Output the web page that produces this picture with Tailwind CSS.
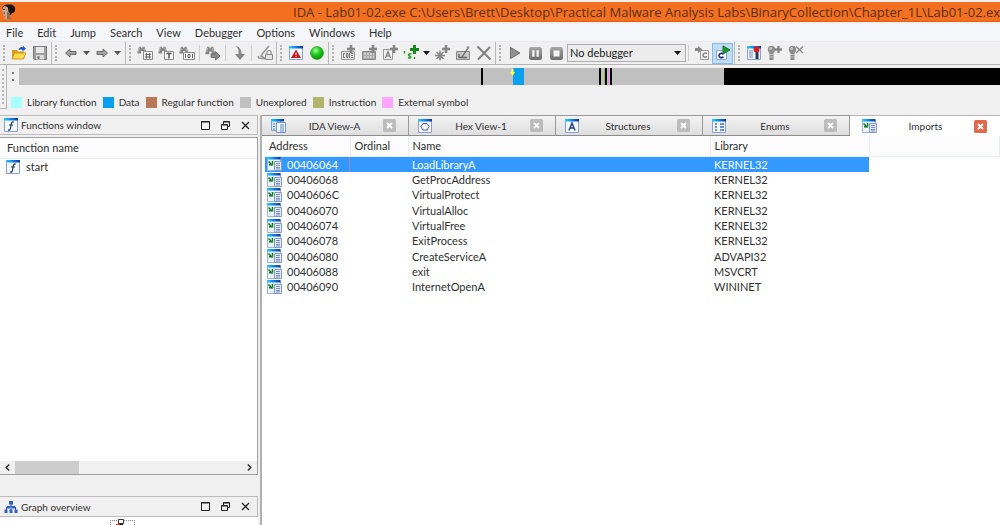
<!DOCTYPE html>
<html lang="en">
<head>
<meta charset="utf-8">
<title>IDA - Lab01-02.exe</title>
<script src="https://cdn.jsdelivr.net/npm/@tailwindcss/browser@4"></script>
</head>
<body class="h-screen flex flex-col overflow-hidden bg-[#f0f0f0] font-['Lato','Open_Sans',sans-serif] text-[11px] leading-4 text-[#303030]">
<svg class="absolute size-0" aria-hidden="true">
  <defs>
    <linearGradient id="bar"><stop offset="0" stop-color="#1fd0ff"/><stop offset=".5" stop-color="#1080e8"/><stop offset="1" stop-color="#0838a0"/></linearGradient>
    <radialGradient id="ball" cx=".4" cy=".3" r=".8"><stop offset="0" stop-color="#a8ff98"/><stop offset=".4" stop-color="#1fd01f"/><stop offset="1" stop-color="#067a06"/></radialGradient>
    <linearGradient id="btn" x2="0" y2="1"><stop offset="0" stop-color="#a8a8a8"/><stop offset="1" stop-color="#6c6c6c"/></linearGradient>
    <symbol id="win" viewBox="0 0 14 14"><path d="M.5.5h13v13H.5z" fill="#f4f8ff" stroke="#8c9fd8"/><path d="M0 0h14v2.5H0z" fill="url(#bar)"/></symbol>
    <symbol id="fn" viewBox="0 0 14 14"><use href="#win"/><path d="M9.800 4.200c-1.800-.8-2.300.6-2.600 2.200l-.8 4c-.3 1.500-1 2-2.400 1.500M5 7h4" fill="none" stroke="#23395e" stroke-width="1.200"/></symbol>
    <symbol id="imp" viewBox="0 0 15 14"><path d="M.5 1.500h13v12H.5z" fill="#edf4ff" stroke="#9fb2dc"/><path d="M0 0h13.500v2.500H0z" fill="url(#bar)"/><path d="M7.500 4.500h7v9h-7z" fill="#e4ecfc" stroke="#8298ce"/><path d="M9 6.500h4M9 8.500h4M9 10.500h4M9 12h4" stroke="#6c82bd" stroke-width=".9"/><path d="M1.500 4.500l4 4M5.500 4v3.800H2" fill="none" stroke="#117a22" stroke-width="1.500"/><path d="M3.500 5.500l2 2" stroke="#38d048"/></symbol>
    <symbol id="view" viewBox="0 0 15 14"><path d="M.5.5h9v11h-9z" fill="#d8eafc" stroke="#7b9fd2"/><path d="M0 0h13v2.500H0z" fill="url(#bar)"/><path d="M5.500 3.500h9v10h-9z" fill="#f3f7ff" stroke="#7791cc"/><path d="M2 5h2M2 7.500h2M2 10h2M9 6h4M9 8h4M9 10h4M9 12h4" stroke="#5c82c4"/></symbol>
    <symbol id="bino" viewBox="0 0 16 16"><path d="M2.500 2h2.200l.8 2h.8l.8-2h2.200l2 6.500v2H7.500v-3H5v3H.5v-2z" fill="#858585"/><path d="M3 3.200L1.800 8M8.500 3.200l.8 4" stroke="#c5c5c5"/></symbol>
    <symbol id="plus" viewBox="0 0 8 8"><path d="M2.700 0h2.600v2.700H8v2.600H5.300V8H2.700V5.300H0V2.700h2.700z"/></symbol>
    <symbol id="caret" viewBox="0 0 7 4"><path d="M0 0h7L3.500 4z"/></symbol>
    <symbol id="arrow" viewBox="0 0 14 12"><path d="M1.500 6l4.500-4v2.500h6v3H6V10z" fill="#a2a2a2" stroke="#6a6a6a"/></symbol>
    <symbol id="pin" viewBox="0 0 16 16"><path d="M2.500 7h4v8h-4z" fill="#8b8b8b"/><path d="M2.500 9.500h4M2.500 12h4" stroke="#d0d0d0" stroke-width=".8"/><circle cx="4.500" cy="4.500" r="3.700" fill="#8e8e8e"/><circle cx="3.600" cy="3.600" r="1.500" fill="#c2c2c2"/></symbol>
    <symbol id="max" viewBox="0 0 9 9"><path d="M.5.500h8v8h-8z" fill="none" stroke="#222"/><path d="M0 1h9" stroke="#222"/></symbol>
    <symbol id="restore" viewBox="0 0 9 9"><path d="M2.500 3V.5h6v5H6.500M.500 3.500h6v5h-6z" fill="none" stroke="#222"/><path d="M2.500 1h6M.500 4h6" stroke="#222"/></symbol>
    <symbol id="close" viewBox="0 0 9 9"><path d="M1 1l7 7M8 1L1 8" stroke="#222" stroke-width="1.400"/></symbol>
    <symbol id="tabx" viewBox="0 0 13 13"><rect width="13" height="13" rx="1.500" fill="currentColor"/><path d="M4 4l5 5M9 4L4 9" stroke="#fff" stroke-width="1.800"/></symbol>
  </defs>
</svg>

<header class="shrink-0 h-6 border-t-2 border-b-2 border-[#f2efee] bg-[#f37021] shadow-[inset_0_-1px_#dd6015] flex items-center overflow-hidden font-['Open_Sans',sans-serif] text-[13px] leading-5 text-[#5b2f18]">
  <svg class="shrink-0 size-4" viewBox="0 0 16 16"><path d="M2 4C3 1 6 0 9 .5c4-.5 7 2 6 6-.5 2-2 2.500-3 2.500l-1 2-6-1z" fill="#17120f"/><path d="M2.500 3.500C4 1.500 7 2 8 4l.5 4 1 1v3l2 3H4l1.500-3-2-.5-.5-2.500-.8-1z" fill="#caa48e"/><path d="M7 8l3 1-.5 3 2.500 3H7z" fill="#8d6a58"/><path d="M3 5.500h2M3.500 9h1.500" stroke="#553728"/></svg>
  <h1 class="ml-[277px] whitespace-nowrap">IDA - Lab01-02.exe C:\Users\Brett\Desktop\Practical Malware Analysis Labs\BinaryCollection\Chapter_1L\Lab01-02.exe</h1>
</header>

<nav class="shrink-0 h-[18px] bg-[#f5f6f9] border-b border-[#e9eaee] flex items-center pl-1.5 gap-[14px]">
  <button>File</button><button>Edit</button><button>Jump</button><button>Search</button><button>View</button><button>Debugger</button><button>Options</button><button>Windows</button><button>Help</button>
</nav>

<div class="shrink-0 h-[23px] flex border-b border-[#b5b5b5] [&>div]:flex [&>div]:items-center [&>div]:pr-px [&>div]:border-r [&>div]:border-[#b9b9b9] [&_button]:w-[21px] [&_button]:h-[21px] [&_button]:flex [&_button]:items-center [&_button]:justify-center [&_i]:w-0.5 [&_i]:h-4 [&_i]:ml-[3px] [&_i]:mr-[3px] [&_i]:border-l-2 [&_i]:border-dotted [&_i]:border-[#b4b4b4] [&_hr]:w-px [&_hr]:h-4 [&_hr]:mx-0.5 [&_hr]:border-0 [&_hr]:bg-[#cfcfcf]">
  <div><i></i>
    <button aria-label="Open"><svg class="size-4" viewBox="0 0 16 16"><path d="M1 5h5l1 1.500h6V14H1z" fill="#d9a01c"/><path d="M1 14l2.500-6H15l-2.500 6z" fill="#ffdc4c" stroke="#c48d12" stroke-width=".8"/><path d="M7.500 5c1-3 3-3.500 4.500-2.500V.8l3 3-3.500 2.500V5c-1.500-.8-2.500-.5-4 0z" fill="#1f56d8"/></svg></button>
    <button aria-label="Save"><svg class="size-4" viewBox="0 0 16 16"><path d="M1.500 1.500h13v13h-12l-1-1z" fill="#a0a0a0" stroke="#767676"/><path d="M4 2h8v6H4z" fill="#e8e8e8"/><path d="M4 10h8v4.500H4z" fill="#dcdcdc"/><path d="M5.500 11h2v3h-2z" fill="#777"/></svg></button>
  </div>
  <div class="pr-[3px]!"><i></i>
    <button aria-label="Back"><svg class="w-3.5 h-3" ><use href="#arrow"/></svg></button>
    <button aria-label="Back history" class="w-[10px]!"><svg class="w-[7px] h-1" fill="#555"><use href="#caret"/></svg></button>
    <button aria-label="Forward"><svg class="w-3.5 h-3 -scale-x-100"><use href="#arrow"/></svg></button>
    <button aria-label="Forward history" class="w-[10px]!"><svg class="w-[7px] h-1" fill="#555"><use href="#caret"/></svg></button>
  </div>
  <div><i></i>
    <button aria-label="Search immediate"><svg class="size-4" viewBox="0 0 16 16"><use href="#bino" width="13" height="13"/><path d="M6.500 6.500h9v8h-9z" fill="#f6f6f6" stroke="#8a8a8a"/><path d="M9.500 8v5.500M12.500 8v5.500M8 9.500h6M8 12h6" stroke="#666"/></svg></button>
    <button aria-label="Search text"><svg class="size-4" viewBox="0 0 16 16"><use href="#bino" width="13" height="13"/><path d="M6.500 6.500h9v8h-9z" fill="#f6f6f6" stroke="#8a8a8a"/><path d="M8.500 8.500h5M11 8.500v5" stroke="#555" stroke-width="1.500"/></svg></button>
    <button aria-label="Search bytes"><svg class="size-4" viewBox="0 0 16 16"><use href="#bino" width="13" height="13"/><path d="M4.500 7.500h11v7h-11z" fill="#f6f6f6" stroke="#8a8a8a"/><path d="M6.500 9v4M13.500 9v4M9 9.500h2v3H9z" fill="none" stroke="#666"/></svg></button>
    <hr>
    <button aria-label="Search next"><svg class="size-4" viewBox="0 0 16 16"><use href="#bino" width="14" height="14"/><path d="M6 9h4.500V6.500L15 11l-4.500 4v-2.500H6z" fill="#8a8a8a" stroke="#666" stroke-width=".8"/></svg></button>
    <hr>
    <button aria-label="Jump"><svg class="size-4" viewBox="0 0 16 16"><path d="M5 1c4 1 5.500 4 5.500 8H14l-5 6-5-6h3.500C7.800 6 7.500 3 5 1z" fill="#858585"/></svg></button>
    <hr>
    <button aria-label="Lock highlight"><svg class="size-4" viewBox="0 0 16 16"><path d="M12 1L6 8l-2 3 5 3-7-1-1-2" fill="none" stroke="#999" stroke-width="1.600"/><path d="M8.500 9.500h7v5h-7z" fill="#e4e4e4" stroke="#8b8b8b"/><path d="M10 9V7.500a2 2 0 014 0V9" fill="none" stroke="#8b8b8b" stroke-width="1.200"/></svg></button>
  </div>
  <div><i></i>
    <button aria-label="Problems"><svg class="size-3.5" viewBox="0 0 14 14"><use href="#win"/><path d="M7 3.500L12 12H2z" fill="#d01616"/><path d="M7 6.500v2.700M7 10v1" stroke="#fff"/></svg></button>
    <button aria-label="Analysis status"><svg class="size-3.5" viewBox="0 0 14 14"><circle cx="7" cy="7" r="6.500" fill="url(#ball)" stroke="#2c9a2c" stroke-width=".6"/></svg></button>
  </div>
  <div><i></i>
    <button aria-label="Make code"><svg class="size-4" viewBox="0 0 16 16" fill="#858585"><path d="M1.500 6.500h13v8h-13z" fill="#eee" stroke="#999"/><path d="M5 8.500H3.500v4H5M6.500 8.500H8v4H6.500zM9.500 8v5M11 8.500h2.500M11 10.500h2M11 12.500h2.500" fill="none" stroke="#777"/><use href="#plus" x="7" y="0" width="8" height="8"/></svg></button>
    <button aria-label="Make data"><svg class="size-4" viewBox="0 0 16 16" fill="#858585"><path d="M1.500 6.500h13v8h-13z" fill="#aaa" stroke="#888"/><path d="M3 9h10M3 12h10" stroke="#eee" stroke-dasharray="2 1"/><use href="#plus" x="8" y="0" width="8" height="8"/></svg></button>
    <button aria-label="Make string"><svg class="size-4" viewBox="0 0 16 16" fill="#858585"><path d="M1.500 4.500h9v10h-9z" fill="#f5f5f5" stroke="#999"/><path d="M3.500 13l2.500-6.500L8.500 13M4.500 11h3" fill="none" stroke="#777" stroke-width="1.200"/><use href="#plus" x="8" y="0" width="8" height="8"/></svg></button>
    <button aria-label="Strings"><svg class="size-4" viewBox="0 0 16 16" fill="#118a18"><path d="M1.500 6v2.500M8.500 9c-3-1-4 1.200-2 2s1.500 2.700-1.500 1.700M11.500 12v2" fill="none" stroke="#259a25" stroke-width="1.500"/><use href="#plus" x="7" y="0" width="9" height="9"/></svg></button>
    <button aria-label="String types" class="w-[10px]!"><svg class="w-[7px] h-1" fill="#111"><use href="#caret"/></svg></button>
    <button aria-label="Make array"><svg class="size-4" viewBox="0 0 16 16" fill="#858585"><path d="M1 10.500h10M6 5.500v10M2.500 7l7 7M9.500 7l-7 7" stroke="#858585" stroke-width="1.500"/><use href="#plus" x="8" y="0" width="8" height="8"/></svg></button>
    <button aria-label="Edit function"><svg class="size-4" viewBox="0 0 16 16"><path d="M1.500 6.500h13v8h-13z" fill="#c8c8c8" stroke="#888"/><path d="M4 9v4M4 12.500h8M7 12l6-9" stroke="#666" stroke-width="1.300"/><circle cx="13" cy="2.500" r="1.500" fill="#999"/></svg></button>
    <button aria-label="Undefine"><svg class="size-4" viewBox="0 0 16 16"><path d="M1.500 1.500l13 13M14 2L2 14.500" stroke="#808080" stroke-width="2"/></svg></button>
  </div>
  <div><i></i>
    <button aria-label="Start process"><svg class="size-3.5" viewBox="0 0 14 14"><path d="M2.500 1.500L12 7l-9.500 5.500z" fill="#909090" stroke="#6d6d6d"/></svg></button>
    <button aria-label="Pause process"><svg class="size-[13px]" viewBox="0 0 13 13"><rect width="13" height="13" rx="2.500" fill="url(#btn)"/><path d="M3.200 3.200h2.300v6.600H3.200zM7.500 3.200h2.300v6.600H7.500z" fill="#f4f4f4"/></svg></button>
    <button aria-label="Stop process"><svg class="size-[13px]" viewBox="0 0 13 13"><rect width="13" height="13" rx="2.500" fill="url(#btn)"/><path d="M3.500 3.500h6v6h-6z" fill="#f4f4f4"/></svg></button>
    <label class="relative block w-[119px] h-[18px]"><span class="sr-only">Debugger</span>
      <select class="appearance-none block w-full h-full border border-[#adadad] bg-[#ececec] pl-0.5 text-[11px] leading-4 text-[#222]"><option>No debugger</option></select>
      <svg class="absolute right-[5px] top-[7px] w-[7px] h-1" fill="#111"><use href="#caret"/></svg>
    </label>
    <hr>
    <button aria-label="Attach"><svg class="size-4" viewBox="0 0 16 16"><path d="M1 3h3V1l4.500 3.500L4 8V6H1z" fill="#888"/><path d="M6.500 5.500h8v9h-8z" fill="#f3f3f3" stroke="#999"/><path d="M13 8.500c-2-1-4 0-4 1.700s2 2.500 4 1.500" fill="none" stroke="#777" stroke-width="1.400"/></svg></button>
    <button aria-label="Source debugging" aria-pressed="true" class="border border-[#86b8e8] bg-[#c0dcf6]"><svg class="size-4" viewBox="0 0 16 16"><path d="M1.500 5.500h10v9h-10z" fill="#f8fbff" stroke="#8ba4d0"/><path d="M8.500 9c-2-1.200-4.500-.5-4.500 1.500s2.500 2.700 4.500 1.500" fill="none" stroke="#1b2a80" stroke-width="1.600"/><path d="M8 .8L15 5 8 9z" fill="#17a027" stroke="#0b641a" stroke-width=".8"/></svg></button>
  </div>
  <div class="border-r-0!"><i></i>
    <button aria-label="Breakpoints"><svg class="size-4" viewBox="0 0 16 16"><use href="#win" x="1" y="1" width="14" height="14"/><path d="M3 6h4M3 8h4M3 10h4M3 12h4" stroke="#6a86cc"/><path d="M9.500 6h3v8h-3z" fill="#29365f"/><circle cx="10.500" cy="4.500" r="3" fill="#e01c1c"/></svg></button>
    <button aria-label="Add breakpoint"><svg class="size-4" viewBox="0 0 16 16" fill="#858585"><use href="#pin" width="16" height="16"/><use href="#plus" x="8" y="1" width="7" height="7"/></svg></button>
    <button aria-label="Delete breakpoint"><svg class="size-4" viewBox="0 0 16 16"><use href="#pin" width="16" height="16"/><path d="M8 1.500l7 6.500M15 1.500L8 8" stroke="#858585" stroke-width="1.200"/></svg></button>
  </div>
</div>

<section class="shrink-0 h-[50px] flex" aria-label="Navigation band">
  <div class="w-[7px] h-[44px] border-r border-b border-[#b4b4b4] flex justify-center py-1"><span class="border-l-2 border-dotted border-[#b8b8b8]"></span></div>
  <div class="flex-1 min-w-0 pt-[3px]">
    <div class="h-[17px] flex">
      <div class="w-3 flex flex-col items-center justify-around py-0.5"><span class="size-0.5 bg-[#777]"></span><span class="size-0.5 bg-[#777]"></span></div>
      <div class="relative flex-1 flex bg-[#c0c0c0]">
        <span class="ml-[462px] w-0.5 bg-black"></span>
        <span class="ml-[30px] w-[11px] bg-[#0aa0ee]"></span>
        <span class="ml-[75px] w-0.5 bg-black"></span>
        <span class="ml-[3px] w-px bg-[#b0b060]"></span>
        <span class="w-0.5 bg-black"></span>
        <span class="ml-px w-px bg-[#ff80ff]"></span>
        <span class="ml-px w-0.5 bg-black"></span>
        <span class="ml-28 flex-1 bg-black"></span>
        <svg class="absolute left-[491px] top-px w-[5px] h-[7px]" viewBox="0 0 5 7"><path d="M1.500 0h2v3H5L2.500 7 0 3h1.500z" fill="#ffff50"/></svg>
      </div>
    </div>
    <ul class="mt-[9px] pl-1 flex gap-1.5 items-center whitespace-nowrap text-[10px] [&>li]:flex [&>li]:items-center [&>li]:gap-[5px] [&_b]:size-[11px]">
      <li><b class="bg-[#a8ffff]"></b>Library function</li>
      <li><b class="bg-[#0aa0ee]"></b>Data</li>
      <li><b class="bg-[#b87858]"></b>Regular function</li>
      <li><b class="bg-[#c0c0c0]"></b>Unexplored</li>
      <li><b class="bg-[#b4b468]"></b>Instruction</li>
      <li><b class="bg-[#ffa4ff]"></b>External symbol</li>
    </ul>
  </div>
</section>

<main class="flex-1 min-h-0 flex">
  <aside class="shrink-0 w-[258px] flex flex-col">
    <section class="flex-1 min-h-0 flex flex-col">
      <header class="shrink-0 h-5 border border-l-0 border-[#bcbcbc] flex items-center pl-1 pr-[7px]">
        <svg class="size-3.5"><use href="#fn"/></svg>
        <h2 class="ml-[3px] mr-auto text-[10px]">Functions window</h2>
        <span class="flex gap-[11px]"><button aria-label="Maximize"><svg class="size-[9px]"><use href="#max"/></svg></button><button aria-label="Float"><svg class="size-[9px]"><use href="#restore"/></svg></button><button aria-label="Close"><svg class="size-[9px]"><use href="#close"/></svg></button></span>
      </header>
      <div class="mt-0.5 flex-1 min-h-0 flex flex-col border border-l-0 border-[#a0a0a0] bg-white">
        <table class="w-full text-left">
          <thead><tr><th class="h-5 pl-[7px] font-normal bg-[#fcfcfc] border-b border-[#e6eef8]">Function name</th></tr></thead>
          <tbody><tr><td class="pl-1.5 py-0"><span class="flex items-center gap-1.5"><svg class="size-3.5"><use href="#fn"/></svg>start</span></td></tr></tbody>
        </table>
        <div class="mt-auto h-[13px] bg-[#f0f0f0] flex items-center px-[5px]">
          <button aria-label="Scroll left"><svg class="w-[5px] h-[7px]" viewBox="0 0 5 7"><path d="M4.200.5l-3 3 3 3" fill="none" stroke="#333" stroke-width="1.500"/></svg></button>
          <span class="ml-[5px] w-16 h-full bg-[#cdcdcd]"></span>
          <button aria-label="Scroll right" class="ml-auto"><svg class="w-[5px] h-[7px]" viewBox="0 0 5 7"><path d="M.8.500l3 3-3 3" fill="none" stroke="#333" stroke-width="1.500"/></svg></button>
        </div>
      </div>
    </section>
    <section class="mt-[21px] shrink-0 h-[29px]">
      <header class="h-[21px] border border-l-0 border-[#bcbcbc] flex items-center pl-1 pr-[7px]">
        <svg class="size-3.5" viewBox="0 0 14 14"><path d="M7 4v7M2.500 10V7h9v3" fill="none" stroke="#2850b0"/><path d="M5 1h4v3.500H5zM3 6h3v2.500H3zM8 6h3v2.500H8zM.500 9.500h3V13h-3zM5.500 9.500h3V13h-3zM10.500 9.500h3V13h-3z" fill="#2f60cc"/></svg>
        <h2 class="ml-[3px] mr-auto text-[10px]">Graph overview</h2>
        <span class="flex gap-[11px]"><button aria-label="Maximize"><svg class="size-[9px]"><use href="#max"/></svg></button><button aria-label="Float"><svg class="size-[9px]"><use href="#restore"/></svg></button><button aria-label="Close"><svg class="size-[9px]"><use href="#close"/></svg></button></span>
      </header>
      <div class="h-2 bg-white flex"><svg class="ml-[110px] w-[25px] h-2" viewBox="0 0 25 8"><path d="M.500 8V3.500h24V8" fill="none" stroke="#888" stroke-dasharray="1 1"/><path d="M8.500 2.500h5v4h-5z" fill="#fff" stroke="#333"/><path d="M6 7h4v1H6z" fill="#e22"/><path d="M10 7h3v1h-3z" fill="#111"/></svg></div>
    </section>
  </aside>

  <section class="ml-0.5 flex-1 min-w-0 flex flex-col border-l-2 border-[#b0b0b0] bg-white">
    <div role="tablist" class="shrink-0 h-[21px] flex bg-[#f0f0f0] border-b border-[#8c8c8c] text-[10px]">
      <div role="tab" class="w-[147px] flex items-center justify-between pl-[9px] pr-3 border-t border-r border-[#999] bg-linear-to-b from-[#f3f3f3] to-[#dedede]"><svg class="w-[15px] h-3.5"><use href="#view"/></svg><span>IDA View-A</span><button aria-label="Close IDA View-A" class="text-[#bcbcbc]"><svg class="size-[13px]"><use href="#tabx"/></svg></button></div>
      <div role="tab" class="w-[147px] flex items-center justify-between pl-[9px] pr-3 border-t border-r border-[#999] bg-linear-to-b from-[#f3f3f3] to-[#dedede]"><svg class="size-3.5" viewBox="0 0 14 14"><use href="#win"/><path d="M5 4.500h4l2 3-2 3.500H5L3 7.500z" fill="#fff" stroke="#3a50e0"/></svg><span>Hex View-1</span><button aria-label="Close Hex View-1" class="text-[#bcbcbc]"><svg class="size-[13px]"><use href="#tabx"/></svg></button></div>
      <div role="tab" class="w-[147px] flex items-center justify-between pl-[9px] pr-3 border-t border-r border-[#999] bg-linear-to-b from-[#f3f3f3] to-[#dedede]"><svg class="size-3.5" viewBox="0 0 14 14"><use href="#win"/><path d="M4 11.500L7 4l3 7.500M5 9h4" fill="none" stroke="#23467e" stroke-width="1.500"/></svg><span>Structures</span><button aria-label="Close Structures" class="text-[#bcbcbc]"><svg class="size-[13px]"><use href="#tabx"/></svg></button></div>
      <div role="tab" class="w-[147px] flex items-center justify-between pl-[9px] pr-3 border-t border-r border-[#999] bg-linear-to-b from-[#f3f3f3] to-[#dedede]"><svg class="size-3.5" viewBox="0 0 14 14"><use href="#win"/><path d="M3 5h2M3 8h2M3 11h2M8 5h4M8 8h4M8 11h4" stroke="#3f70d0" stroke-width="1.300"/></svg><span>Enums</span><button aria-label="Close Enums" class="text-[#bcbcbc]"><svg class="size-[13px]"><use href="#tabx"/></svg></button></div>
      <div role="tab" aria-selected="true" class="-mb-px flex-1 flex items-center justify-between pl-3 pr-[13px] border-t border-[#b8b8b8] bg-white"><svg class="w-[15px] h-3.5"><use href="#imp"/></svg><span>Imports</span><button aria-label="Close Imports" class="text-[#e0694a]"><svg class="size-[13px]"><use href="#tabx"/></svg></button></div>
    </div>
    <div class="flex-1 min-h-0 pl-[3px]">
      <table class="w-full table-fixed text-left [&_th]:font-normal [&_th]:h-5 [&_th]:p-0 [&_th]:pl-1 [&_th]:bg-[#fcfcfc] [&_th]:border-b [&_th]:border-r [&_th]:border-[#e6eef8] [&_td]:p-0 [&_td]:pl-1 [&_td:first-child]:pl-0.5 [&_td]:leading-[15px] [&_td>span]:flex [&_td>span]:items-center [&_td>span]:gap-[5px] [&_td_svg]:w-[15px] [&_td_svg]:h-3.5">
        <thead><tr><th class="w-[85px]">Address</th><th class="w-[58px]">Ordinal</th><th class="w-[302px]">Name</th><th class="w-[159px]">Library</th><th></th></tr></thead>
        <tbody class="[&_tr:nth-child(3n+1)]:h-4">
          <tr class="text-white [&>td:not(:last-child)]:bg-[#3399ff]"><td class="shadow-[inset_-1px_0_#9a86c8]"><span><svg><use href="#imp"/></svg>00406064</span></td><td></td><td>LoadLibraryA</td><td>KERNEL32</td><td></td></tr>
          <tr><td><span><svg><use href="#imp"/></svg>00406068</span></td><td></td><td>GetProcAddress</td><td>KERNEL32</td><td></td></tr>
          <tr><td><span><svg><use href="#imp"/></svg>0040606C</span></td><td></td><td>VirtualProtect</td><td>KERNEL32</td><td></td></tr>
          <tr><td><span><svg><use href="#imp"/></svg>00406070</span></td><td></td><td>VirtualAlloc</td><td>KERNEL32</td><td></td></tr>
          <tr><td><span><svg><use href="#imp"/></svg>00406074</span></td><td></td><td>VirtualFree</td><td>KERNEL32</td><td></td></tr>
          <tr><td><span><svg><use href="#imp"/></svg>00406078</span></td><td></td><td>ExitProcess</td><td>KERNEL32</td><td></td></tr>
          <tr><td><span><svg><use href="#imp"/></svg>00406080</span></td><td></td><td>CreateServiceA</td><td>ADVAPI32</td><td></td></tr>
          <tr><td><span><svg><use href="#imp"/></svg>00406088</span></td><td></td><td>exit</td><td>MSVCRT</td><td></td></tr>
          <tr><td><span><svg><use href="#imp"/></svg>00406090</span></td><td></td><td>InternetOpenA</td><td>WININET</td><td></td></tr>
        </tbody>
      </table>
    </div>
  </section>
</main>
</body>
</html>
